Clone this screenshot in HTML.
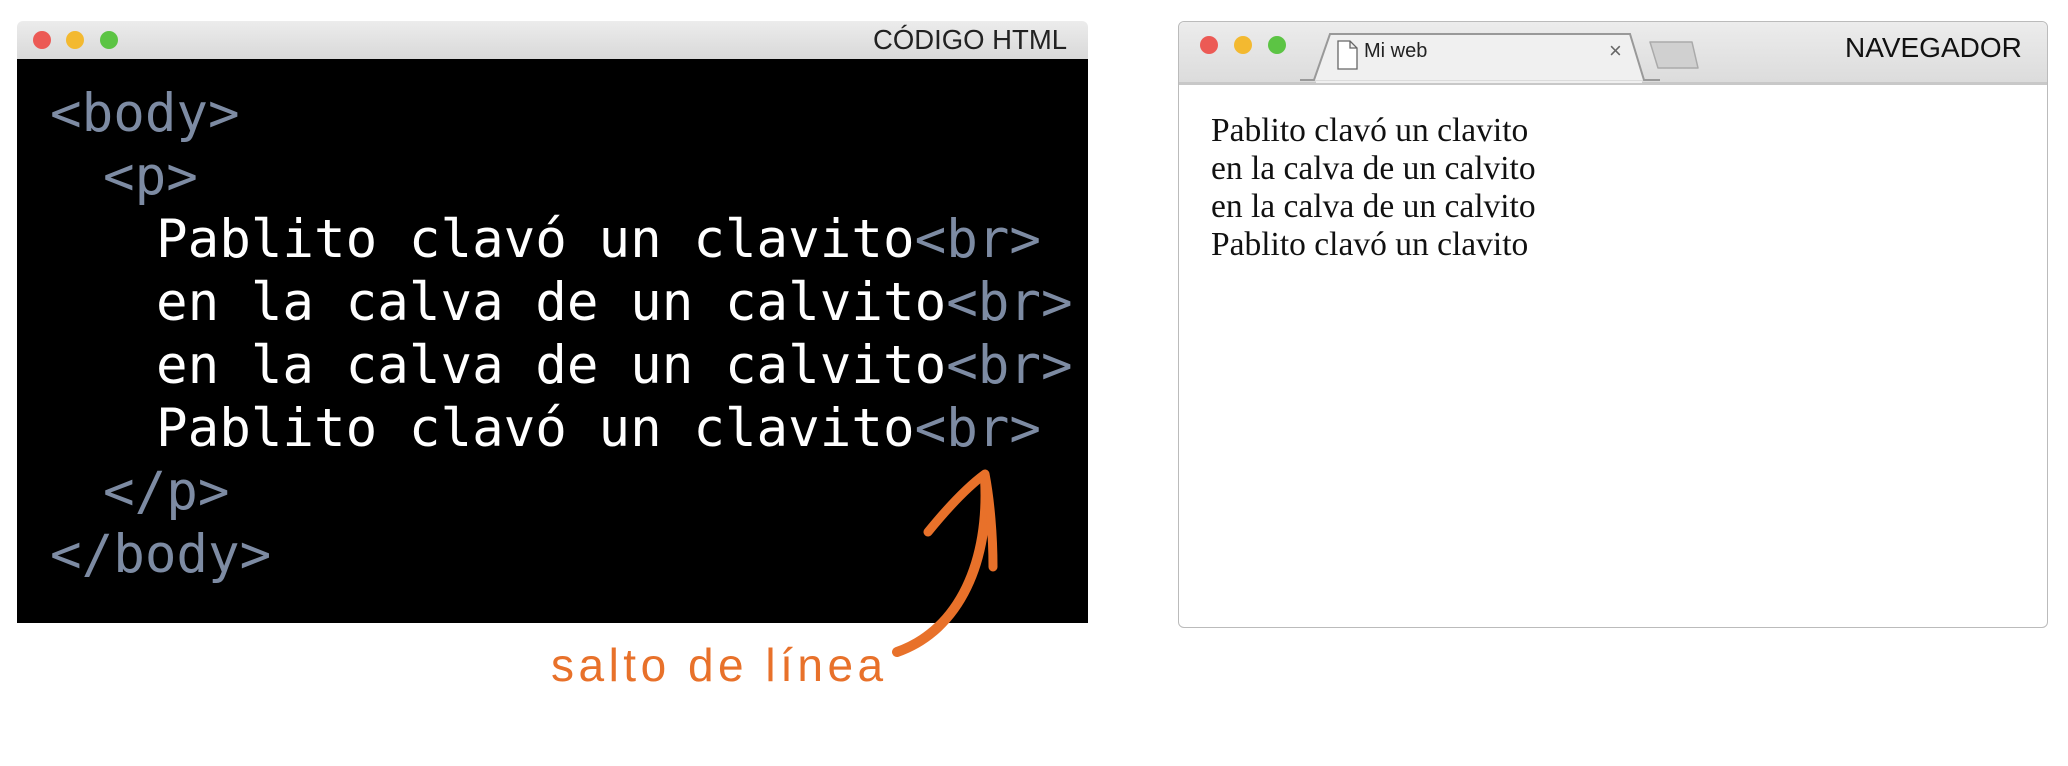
<!DOCTYPE html>
<html><head><meta charset="utf-8"><style>
body{margin:0;width:2068px;height:766px;background:#fff;position:relative;overflow:hidden;font-family:"Liberation Sans",sans-serif}
.abs{position:absolute}
.dot{position:absolute;width:18px;height:18px;border-radius:50%}
.code{position:absolute;font-family:"DejaVu Sans Mono",monospace;font-size:52.5px;color:#fff;line-height:63px}
.code div{height:63px;white-space:pre}
.t{color:#7d8ba3}
</style></head><body>
<!-- left window -->
<div class="abs" style="left:17px;top:21px;width:1071px;height:38px;background:linear-gradient(#ececec,#d9d9d9);border-radius:6px 6px 0 0;border-bottom:1px solid #bbb"></div>
<div class="dot" style="left:33px;top:31px;background:#ec5a55"></div>
<div class="dot" style="left:66px;top:31px;background:#f3b930"></div>
<div class="dot" style="left:100px;top:31px;background:#5cc444"></div>
<div class="abs" style="left:873px;top:24px;font-size:27.5px;color:#222">CÓDIGO HTML</div>
<div class="abs" style="left:17px;top:59px;width:1071px;height:564px;background:#000"></div>
<div class="code" style="left:50px;top:82px"><div><span class="t">&lt;body&gt;</span></div><div style="padding-left:53px"><span class="t">&lt;p&gt;</span></div><div style="padding-left:106px">Pablito clavó un clavito<span class="t">&lt;br&gt;</span></div><div style="padding-left:106px">en la calva de un calvito<span class="t">&lt;br&gt;</span></div><div style="padding-left:106px">en la calva de un calvito<span class="t">&lt;br&gt;</span></div><div style="padding-left:106px">Pablito clavó un clavito<span class="t">&lt;br&gt;</span></div><div style="padding-left:53px"><span class="t">&lt;/p&gt;</span></div><div><span class="t">&lt;/body&gt;</span></div></div>
<svg class="abs" style="left:0;top:0" width="2068" height="766">
<path d="M897 652 C960 630 990 560 985 478" stroke="#e8712a" stroke-width="10" fill="none" stroke-linecap="round"/>
<path d="M928 532 C950 505 970 485 985 474 C990 500 993 535 993 567" stroke="#e8712a" stroke-width="9" fill="none" stroke-linecap="round" stroke-linejoin="round"/>
</svg>
<div class="abs" style="left:551px;top:638px;font-size:46px;color:#e8712a;letter-spacing:4.5px">salto de línea</div>
<!-- right window -->
<div class="abs" style="left:1178px;top:21px;width:868px;height:605px;border:1px solid #bbb;border-radius:6px;background:#fff"></div>
<div class="abs" style="left:1179px;top:22px;width:868px;height:60px;background:linear-gradient(#ececec,#dcdcdc);border-radius:6px 6px 0 0;border-bottom:3px solid #c8c8c8"></div>
<div class="dot" style="left:1200px;top:36px;background:#ec5a55"></div>
<div class="dot" style="left:1234px;top:36px;background:#f3b930"></div>
<div class="dot" style="left:1268px;top:36px;background:#5cc444"></div>
<svg class="abs" style="left:1300px;top:28px" width="420" height="56">
<path d="M0 52 L14 52 L30 6 L330 6 L344 52 L360 52" fill="#f0f0f0" stroke="#999" stroke-width="2"/>
<path d="M350 14 L392 14 L398 40 L358 40 Z" fill="#d0d0d0" stroke="#aaa" stroke-width="1.5" stroke-linejoin="round"/>
<path d="M16 54 L342 54" stroke="#f0f0f0" stroke-width="2"/>
<path d="M38 13 h12 l7 7 v21 h-19 z M50 13 v7 h7" fill="#fff" stroke="#666" stroke-width="1.3"/>
</svg>
<div class="abs" style="left:1364px;top:40px;font-size:20px;color:#222">Mi web</div>
<div class="abs" style="left:1609px;top:38px;font-size:22px;color:#666">×</div>
<div class="abs" style="left:1845px;top:32px;font-size:28px;color:#111">NAVEGADOR</div>
<div class="abs" style="left:1211px;top:112px;font-family:'Liberation Serif',serif;font-size:33.5px;line-height:38px;color:#111">Pablito clavó un clavito<br>en la calva de un calvito<br>en la calva de un calvito<br>Pablito clavó un clavito</div>
</body></html>
